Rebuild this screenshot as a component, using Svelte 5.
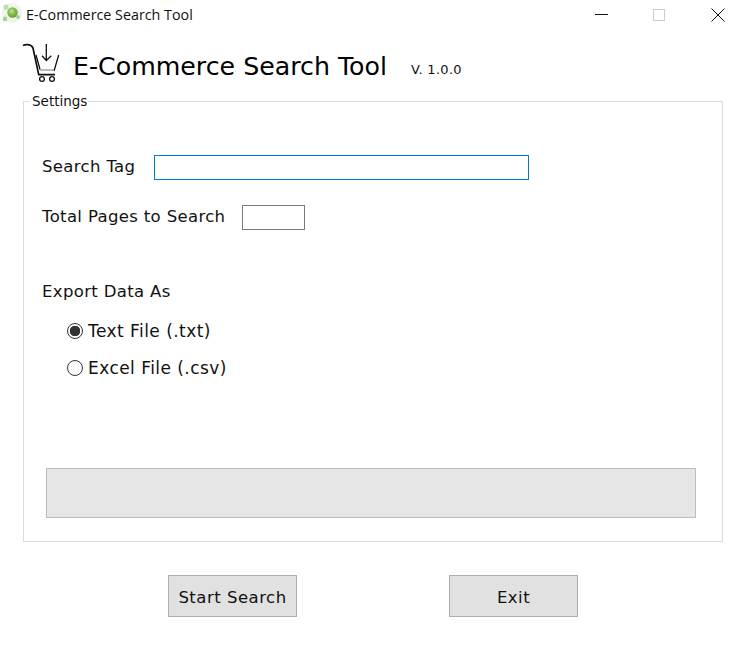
<script>
  let tag = $state('');
  let pages = $state('');
  let format = $state('txt');
</script>

<div class="window">
  <header class="titlebar">
    <div class="app-title">
      <svg class="app-icon" width="22" height="22" viewBox="1 4 22 22" aria-hidden="true">
        <defs>
          <radialGradient id="ball" cx="0.42" cy="0.38" r="0.7">
            <stop offset="0" stop-color="#c4e08e" />
            <stop offset="0.55" stop-color="#7db643" />
            <stop offset="1" stop-color="#5f9a35" />
          </radialGradient>
        </defs>
        <circle cx="12" cy="13" r="10" fill="#eef6ea" />
        <circle cx="12.500" cy="12.500" r="5.200" fill="url(#ball)" />
        <circle cx="6" cy="7" r="2.600" fill="#bcdcae" />
        <circle cx="5" cy="19" r="2.400" fill="#a9d38e" />
        <circle cx="18" cy="17" r="2" fill="#a6cf95" />
      </svg>
      <span class="app-name">E-Commerce Search Tool</span>
    </div>
    <div class="controls">
      <span class="ctl"><svg width="14" height="14" viewBox="0 0 14 14"><path d="M0 6.500H13" stroke="#111" fill="none" /></svg></span>
      <span class="ctl"><svg width="14" height="14" viewBox="0 0 14 14"><rect x="0.500" y="1.500" width="11" height="11" stroke="#ccc" fill="none" /></svg></span>
      <span class="ctl"><svg width="14" height="14" viewBox="0 0 14 14"><path d="M0.500 0.500L13.500 13.500M13.500 0.500L0.500 13.500" stroke="#111" fill="none" /></svg></span>
    </div>
  </header>

  <div class="brand">
    <svg class="cart" width="40" height="40" viewBox="0 0 40 40" aria-hidden="true">
      <g fill="none" stroke="#111" stroke-width="1.300">
        <path d="M1 2.500C3 1.500 9 0.500 11 5L16.700 31.700H33" stroke-width="1.700" />
        <path d="M14 12L18 26.500M36.700 12L32 28" />
        <path d="M24.300 1V17M20 12.700L24.300 17.500L29.300 12.700" />
        <path d="M18 27H32" stroke="#aaa" stroke-width="1.600" />
        <circle cx="20" cy="36" r="2.400" />
        <circle cx="30" cy="36" r="2.400" />
      </g>
    </svg>
    <h1>E-Commerce Search Tool</h1>
    <span class="version">V. 1.0.0</span>
  </div>

  <fieldset class="settings">
    <legend>Settings</legend>

    <div class="field tag-row">
      <label for="tag">Search Tag</label>
      <input id="tag" class="tag-input" type="text" bind:value={tag} />
    </div>
    <div class="field pages-row">
      <label for="pages">Total Pages to Search</label>
      <input id="pages" class="pages-input" type="text" bind:value={pages} />
    </div>

    <div class="export-title">Export Data As</div>
    <div class="radios">
      <label class="radio">
        <input type="radio" bind:group={format} value="txt" />
        <span class="dot"></span>
        <span class="radio-text">Text File (.txt)</span>
      </label>
      <label class="radio">
        <input type="radio" bind:group={format} value="csv" />
        <span class="dot"></span>
        <span class="radio-text">Excel File (.csv)</span>
      </label>
    </div>

    <div class="progress"></div>
  </fieldset>

  <div class="actions">
    <button type="button" class="start">Start Search</button>
    <button type="button" class="exit">Exit</button>
  </div>
</div>

<style>
  :global(body) {
    margin: 0;
    background: #fff;
  }

  .window {
    width: 745px;
    height: 653px;
    box-sizing: border-box;
    overflow: hidden;
    background: #fff;
    color: #111;
    font-family: "DejaVu Sans", Verdana, sans-serif;
    font-size: 16.500px;
    letter-spacing: 0.35px;
  }

  .titlebar {
    height: 30px;
    display: flex;
    align-items: center;
    justify-content: space-between;
    letter-spacing: 0;
  }

  .app-title {
    display: flex;
    align-items: center;
    gap: 3px;
    padding-left: 1px;
    font-family: "Open Sans", "Noto Sans", sans-serif;
    font-size: 14.300px;
    color: #111;
  }

  .app-icon {
    overflow: visible;
  }

  .app-name {
    margin-bottom: 2px;
  }

  .controls {
    display: flex;
    gap: 44px;
    padding-right: 20px;
  }

  .ctl {
    display: block;
    width: 14px;
    height: 14px;
  }

  .ctl svg {
    display: block;
  }

  .brand {
    display: flex;
    align-items: center;
    height: 42px;
    padding: 0 0 0 22px;
    margin-top: 12px;
  }

  .cart {
    flex: none;
  }

  h1 {
    margin: 6px 0 0 11px;
    font-family: "DejaVu Sans", Verdana, sans-serif;
    font-weight: 400;
    font-size: 25.250px;
    letter-spacing: 0;
    color: #000;
  }

  .version {
    margin: 12px 0 0 24px;
    font-size: 13px;
    letter-spacing: 0.3px;
  }

  .settings {
    box-sizing: border-box;
    width: 700px;
    height: 448px;
    margin: 10px 0 0 23px;
    padding: 0 26px 0 18px;
    border: 1px solid #dcdcdc;
  }

  legend {
    margin-left: -13px;
    padding: 0 1px 0 3px;
    font-size: 13.500px;
    letter-spacing: 0;
    line-height: 15px;
  }

  .field {
    display: flex;
    align-items: center;
    height: 26px;
  }

  .tag-row {
    margin-top: 45px;
  }

  .pages-row {
    margin-top: 24px;
  }

  .field label {
    white-space: nowrap;
    margin-bottom: 2px;
  }

  input[type="text"] {
    box-sizing: border-box;
    height: 25px;
    padding: 0 4px;
    background: #fff;
    outline: none;
    font: inherit;
  }

  .tag-input {
    width: 375px;
    margin-left: 19px;
    border: 1px solid #0078d7;
  }

  .pages-input {
    width: 63px;
    margin-left: 17px;
    border: 1px solid #7a7a7a;
  }

  .export-title {
    margin-top: 51px;
    line-height: 22px;
  }

  .radios {
    display: flex;
    flex-direction: column;
    gap: 15px;
    margin-top: 17px;
    padding-left: 25px;
  }

  .radio {
    display: flex;
    align-items: center;
    gap: 5px;
    height: 22px;
  }

  .radio-text {
    font-size: 17px;
    letter-spacing: 0.45px;
  }

  .radio input {
    position: absolute;
    opacity: 0;
    width: 0;
    height: 0;
    margin: 0;
  }

  .dot {
    box-sizing: border-box;
    width: 16px;
    height: 16px;
    border: 1px solid #333;
    border-radius: 50%;
    background: #fff;
  }

  .radio input:checked + .dot {
    background: radial-gradient(circle, #333 0 5px, #fff 5.500px);
  }

  .progress {
    box-sizing: border-box;
    width: 650px;
    height: 50px;
    margin: 89px 0 0 4px;
    background: #e6e6e6;
    border: 1px solid #bcbcbc;
  }

  .actions {
    display: flex;
    gap: 152px;
    margin-top: 33px;
    padding-left: 168px;
  }

  button {
    box-sizing: border-box;
    width: 129px;
    height: 42px;
    padding: 2px 0 0;
    background: #e1e1e1;
    border: 1px solid #adadad;
    color: #111;
    font: inherit;
    letter-spacing: 0.5px;
  }
</style>
